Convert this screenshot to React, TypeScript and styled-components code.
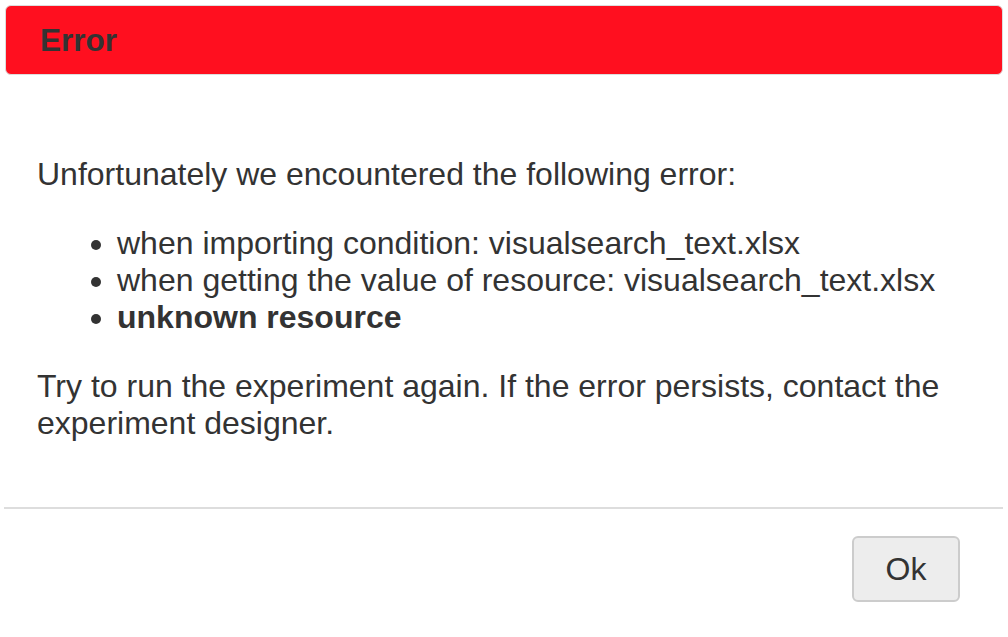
import React from "react";
import styled, { createGlobalStyle } from "styled-components";

const Global = createGlobalStyle`
  html, body { margin: 0; padding: 0; background: #ffffff; }
  body { font-family: "Liberation Sans", Arial, Helvetica, sans-serif; color: #333333; }
  * { box-sizing: border-box; }
`;

const Dialog = styled.div`
  width: 1008px;
  height: 637px;
  padding: 5px 5px 0 5px;
  display: flex;
  flex-direction: column;
  background: #ffffff;
`;

const TitleBar = styled.div`
  height: 70px;
  background: #ff0f1f;
  border: 1px solid #dddddd;
  border-radius: 6px;
  display: flex;
  align-items: center;
  padding-left: 34px;
`;

const Title = styled.span`
  font-size: 31.5px;
  font-weight: bold;
  color: #333333;
`;

const Content = styled.div`
  padding: 81px 32px 0 32px;
  font-size: 32px;
  line-height: 37px;
  color: #333333;
  height: 432px;
`;

const Para = styled.p`
  margin: 0;
`;

const List = styled.ul`
  margin: 32px 0;
  padding-left: 80px;
`;

const Item = styled.li<{ $bold?: boolean }>`
  font-weight: ${(p) => (p.$bold ? "bold" : "normal")};
`;

const Divider = styled.hr`
  margin: 0 0 0 -1px;
  border: none;
  height: 2px;
  background: #dddddd;
`;

const Footer = styled.div`
  display: flex;
  justify-content: flex-end;
  padding: 27px 43px 0 0;
`;

const Button = styled.button`
  width: 108px;
  height: 66px;
  background: #ededed;
  border: 2px solid #cccccc;
  border-radius: 6px;
  font-family: "Liberation Sans", Arial, Helvetica, sans-serif;
  font-size: 32px;
  color: #333333;
  padding: 0;
  cursor: pointer;
`;

export default function App() {
  return (
    <>
      <Global />
      <Dialog>
        <TitleBar>
          <Title>Error</Title>
        </TitleBar>
        <Content>
          <Para>Unfortunately we encountered the following error:</Para>
          <List>
            <Item>when importing condition: visualsearch_text.xlsx</Item>
            <Item>when getting the value of resource: visualsearch_text.xlsx</Item>
            <Item $bold>unknown resource</Item>
          </List>
          <Para>
            Try to run the experiment again. If the error persists, contact the
            experiment designer.
          </Para>
        </Content>
        <Divider />
        <Footer>
          <Button>Ok</Button>
        </Footer>
      </Dialog>
    </>
  );
}
